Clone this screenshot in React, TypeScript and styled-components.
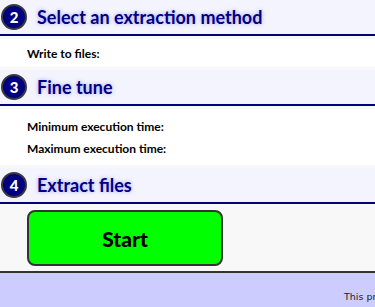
import styled, { createGlobalStyle } from "styled-components";

const GlobalStyle = createGlobalStyle`
  body {
    margin: 0;
    background: #f8f8f8;
    font-family: Lato, "Open Sans", sans-serif;
  }
`

const Page = styled.div`
  width: 375px;
  overflow: hidden;
`

const StepHeader = styled.div`
  display: flex;
  align-items: center;
  gap: 10px;
  height: 34px;
  padding-left: 1px;
  background: #f4f4ff;
  border-bottom: 2px solid #000080;
`

const StepNumber = styled.div`
  width: 22px;
  height: 22px;
  border-radius: 50%;
  background: #000080;
  border: 2px solid #3a3a3a;
  color: white;
  font-weight: 900;
  font-size: 15px;
  display: flex;
  align-items: center;
  justify-content: center;
`

const StepTitle = styled.div`
  color: #000080;
  font-weight: bold;
  font-size: 18px;
  text-shadow: 0 0 4px #a0a0ff;
`

const Section = styled.div<{ $height: number }>`
  margin: 3px 0;
  height: ${p => p.$height}px;
  background: white;
  padding-left: 27px;
  display: flex;
  flex-direction: column;
  justify-content: center;
  gap: 7px;
`

const Label = styled.div`
  font-size: 12px;
  font-weight: bold;
  color: #000;
`

const ActionArea = styled.div`
  padding: 6px 0 5px 27px;
`

const StartButton = styled.button`
  width: 196px;
  height: 56px;
  background: #00ff00;
  border: 2px solid #333;
  border-radius: 8px;
  font-family: Lato, sans-serif;
  font-weight: 900;
  font-size: 21px;
  color: #000;
`

const Footer = styled.div`
  height: 34px;
  background: #ccccff;
  border-top: 2px solid #333;
  border-bottom: 1px solid #000;
  display: flex;
  align-items: flex-end;
  padding-left: 344px;
  white-space: nowrap;
`

const FooterText = styled.span`
  font-family: "DejaVu Sans", sans-serif;
  font-size: 9.5px;
  color: #222;
  padding-bottom: 5px;
`

function Step({ num, title }: { num: number; title: string }) {
  return (
    <StepHeader>
      <StepNumber>{num}</StepNumber>
      <StepTitle>{title}</StepTitle>
    </StepHeader>
  )
}

export default function App() {
  return (
    <Page>
      <GlobalStyle />
      <Step num={2} title="Select an extraction method" />
      <Section $height={28}>
        <Label>Write to files:</Label>
      </Section>
      <Step num={3} title="Fine tune" />
      <Section $height={56}>
        <Label>Minimum execution time:</Label>
        <Label>Maximum execution time:</Label>
      </Section>
      <Step num={4} title="Extract files" />
      <ActionArea>
        <StartButton>Start</StartButton>
      </ActionArea>
      <Footer>
        <FooterText>This program is provided as is</FooterText>
      </Footer>
    </Page>
  )
}
